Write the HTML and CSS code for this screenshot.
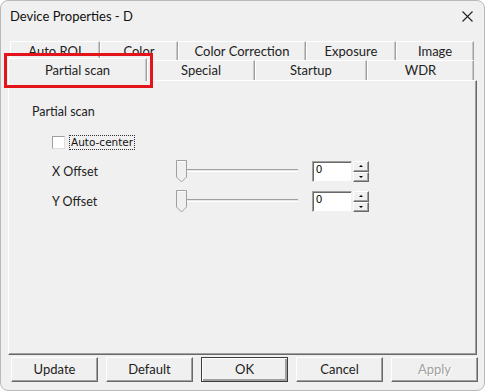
FILE: index.html
```html
<!DOCTYPE html>
<html lang="en">
<head>
  <meta charset="UTF-8">
  <title>Device Properties - D</title>
  <link rel="stylesheet" href="styles.css">
</head>
<body>
  <div class="window">
    <div class="titlebar">
      <span class="title">Device Properties - D</span>
      <svg class="close" width="11" height="11" viewBox="0 0 11 11">
        <path d="M0.5 0.5 L10.5 10.5 M10.5 0.5 L0.5 10.5" stroke="#222" stroke-width="1.1"/>
      </svg>
    </div>

    <div class="tabs">
      <div class="tab-row back">
        <div class="tab w-autoroi">Auto ROI</div>
        <div class="tab w-color">Color</div>
        <div class="tab w-cc">Color Correction</div>
        <div class="tab w-exp">Exposure</div>
        <div class="tab w-img">Image</div>
      </div>
      <div class="tab-row front">
        <div class="tab selected w-partial">Partial scan</div>
        <div class="tab w-special">Special</div>
        <div class="tab w-startup">Startup</div>
        <div class="tab w-wdr">WDR</div>
      </div>
      <div class="highlight"></div>
    </div>

    <div class="panel">
      <div class="group-label">Partial scan</div>

      <div class="check-row">
        <span class="checkbox"></span>
        <span class="check-label">Auto-center</span>
      </div>

      <div class="field-row">
        <span class="field-label">X Offset</span>
        <div class="slider">
          <svg class="thumb" width="11" height="23" viewBox="0 0 11 23">
            <path d="M0.5 0.5 H10.5 V17 L5.5 22 L0.5 17 Z" fill="#f0f0f0" stroke="#a0a0a0"/>
            <path d="M1.5 1.5 H9.5" stroke="#fff"/>
          </svg>
          <div class="track"></div>
        </div>
        <div class="edit">0</div>
        <div class="spin">
          <div class="spin-btn"><span class="arrow up"></span></div>
          <div class="spin-btn"><span class="arrow down"></span></div>
        </div>
      </div>

      <div class="field-row">
        <span class="field-label">Y Offset</span>
        <div class="slider">
          <svg class="thumb" width="11" height="23" viewBox="0 0 11 23">
            <path d="M0.5 0.5 H10.5 V17 L5.5 22 L0.5 17 Z" fill="#f0f0f0" stroke="#a0a0a0"/>
            <path d="M1.5 1.5 H9.5" stroke="#fff"/>
          </svg>
          <div class="track"></div>
        </div>
        <div class="edit">0</div>
        <div class="spin">
          <div class="spin-btn"><span class="arrow up"></span></div>
          <div class="spin-btn"><span class="arrow down"></span></div>
        </div>
      </div>
    </div>

    <div class="buttons">
      <button class="btn">Update</button>
      <button class="btn">Default</button>
      <button class="btn default">OK</button>
      <button class="btn">Cancel</button>
      <button class="btn disabled">Apply</button>
    </div>
  </div>
</body>
</html>
```

FILE: styles.css
```css
* {
  margin: 0;
  padding: 0;
  box-sizing: border-box;
}

body {
  background: #ffffff;
  font-family: Lato, 'Noto Sans', sans-serif;
  font-size: 12.5px;
  color: #222;
}

.window {
  width: 485px;
  height: 391px;
  background: #f0f0f0;
  border: 1px solid #b9b9b9;
  border-radius: 8px;
  display: flex;
  flex-direction: column;
  overflow: hidden;
}

/* title bar */
.titlebar {
  height: 30px;
  display: flex;
  align-items: center;
  justify-content: space-between;
  padding: 0 11px 0 9px;
}

.title {
  font-size: 13px;
  color: #111;
}

/* tabs */
.tabs {
  position: relative;
  margin: 10px 0 0 7px;
  width: 466px;
}

.tab-row {
  display: flex;
  align-items: flex-end;
}

.tab-row.back {
  height: 19px;
  padding-left: 2px;
}

.tab-row.front {
  height: 20px;
}

.tab {
  height: 100%;
  display: flex;
  align-items: center;
  justify-content: center;
  background: #f0f0f0;
  border-left: 1px solid #ffffff;
  border-top: 1px solid #ffffff;
  border-right: 1px solid #a0a0a0;
  box-shadow: inset -1px 0 0 #c8c8c8;
  font-size: 13px;
  color: #222;
  white-space: nowrap;
}

.tab-row.front .tab {
  padding-bottom: 1px;
}

.tab.selected {
  height: 23px;
  margin-bottom: -1px;
  position: relative;
  z-index: 1;
  padding-bottom: 4px;
}

.w-autoroi { width: 90px; }
.w-color { width: 78px; }
.w-cc { width: 128px; }
.w-exp { width: 90px; }
.w-img { width: 78px; }

.w-partial { width: 139px; }
.w-special { width: 108px; }
.w-startup { width: 112px; }
.w-wdr { width: 107px; }

.highlight {
  position: absolute;
  left: -4px;
  top: 12px;
  width: 149px;
  height: 35px;
  border: 3px solid #e3141b;
  z-index: 2;
}

/* panel */
.panel {
  margin-left: 7px;
  width: 469px;
  height: 275px;
  border-left: 1px solid #ffffff;
  border-top: 1px solid #ffffff;
  border-right: 1px solid #696969;
  border-bottom: 1px solid #696969;
  box-shadow: inset -1px -1px 0 #a0a0a0;
  padding: 22px 0 0 23px;
}

.group-label {
  height: 18px;
  line-height: 18px;
}

.check-row {
  display: flex;
  align-items: center;
  margin: 13px 0 0 20px;
  height: 16px;
}

.checkbox {
  width: 13px;
  height: 13px;
  background: #ffffff;
  border-left: 1px solid #a0a0a0;
  border-top: 1px solid #a0a0a0;
  border-right: 1px solid #e0e0e0;
  border-bottom: 1px solid #e0e0e0;
  margin-right: 4px;
}

.check-label {
  font-family: 'DejaVu Sans', sans-serif;
  font-size: 10.5px;
  border: 1px dotted #333;
  padding: 0 1px;
  line-height: 13px;
  color: #111;
}

.field-row {
  display: flex;
  align-items: center;
  margin-left: 20px;
  height: 23px;
}

.check-row + .field-row {
  margin-top: 10px;
}

.field-row + .field-row {
  margin-top: 7px;
}

.field-label {
  width: 124px;
}

.slider {
  width: 122px;
  height: 23px;
  display: flex;
  align-items: flex-start;
}

.thumb {
  flex: none;
}

.track {
  flex: 1;
  height: 3px;
  margin-top: 9px;
  background: #e6e6e6;
  border-top: 1px solid #a0a0a0;
  border-bottom: 1px solid #ffffff;
}

.edit {
  margin-left: 14px;
  width: 40px;
  height: 21px;
  background: #ffffff;
  border-left: 1px solid #a0a0a0;
  border-top: 1px solid #a0a0a0;
  border-right: 1px solid #f0f0f0;
  border-bottom: 1px solid #f0f0f0;
  box-shadow: inset 1px 1px 0 #696969;
  padding: 1px 0 0 3px;
  font-family: 'Liberation Sans', sans-serif;
  font-size: 11px;
  line-height: 13px;
  color: #000;
}

.spin {
  width: 16px;
  height: 21px;
  display: flex;
  flex-direction: column;
  margin-left: 1px;
}

.spin-btn {
  flex: 1;
  display: flex;
  align-items: center;
  justify-content: center;
  background: #f0f0f0;
  border-left: 1px solid #ffffff;
  border-top: 1px solid #ffffff;
  border-right: 1px solid #696969;
  border-bottom: 1px solid #696969;
  box-shadow: inset -1px -1px 0 #a0a0a0;
}

.arrow {
  width: 0;
  height: 0;
  border-left: 2px solid transparent;
  border-right: 2px solid transparent;
}

.arrow.up {
  border-bottom: 2px solid #000;
}

.arrow.down {
  border-top: 2px solid #000;
}

/* bottom buttons */
.buttons {
  display: flex;
  gap: 8px;
  margin: 2px 0 0 10px;
}

.btn {
  width: 87px;
  height: 25px;
  background: #f0f0f0;
  border-left: 1px solid #ffffff;
  border-top: 1px solid #ffffff;
  border-right: 1px solid #696969;
  border-bottom: 1px solid #696969;
  box-shadow: inset -1px -1px 0 #a0a0a0;
  font-family: Lato, 'Noto Sans', sans-serif;
  font-size: 13px;
  color: #222;
  padding-bottom: 2px;
}

.btn.default {
  border: 1px solid #3c3c3c;
  box-shadow: inset 1px 1px 0 #ffffff, inset -2px -2px 0 #a0a0a0;
}

.btn.disabled {
  color: #a0a0a0;
  text-shadow: 1px 1px 0 #ffffff;
}
```
